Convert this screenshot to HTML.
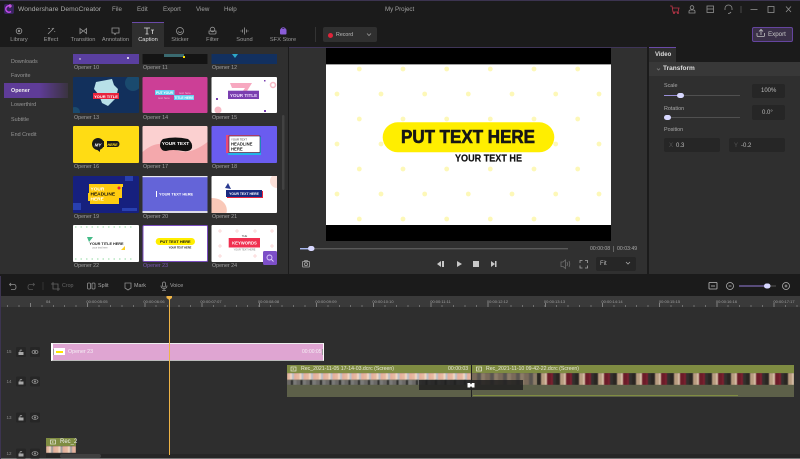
<!DOCTYPE html>
<html><head><meta charset="utf-8">
<style>
html,body{margin:0;padding:0;background:#1b1b1b}
#p{position:relative;width:800px;height:459px;overflow:hidden;background:#1b1b1b;font-family:"Liberation Sans",sans-serif;color:#aaa}
#p div{position:absolute}
.t{white-space:nowrap;line-height:1}
.m{font-size:6.2px;color:#a0a0a0;top:6.5px}
.tab{font-size:5.7px;color:#999;top:37.5px;transform:translateX(-50%);white-space:nowrap;line-height:1}
.side{font-size:5.4px;color:#969696;left:11px;white-space:nowrap;line-height:1}
.lb{font-size:5.3px;color:#a0a0a0;white-space:nowrap;line-height:1}
.rl{font-size:4px;color:#a0a0a0;top:299.5px;white-space:nowrap;line-height:1;transform:translateX(-50%)}
.box{background:#262626;border-radius:2px}
svg{position:absolute;left:0;top:0}
</style></head><body><div id="p">
<div style="left:0;top:0;width:800px;height:1px;background:#3c3450"></div>
<div style="left:0;top:276px;width:1px;height:183px;background:#3c3450"></div>

<!-- panels -->
<div style="left:0;top:47px;width:288px;height:227px;background:#2f2f2f"></div>
<div style="left:289px;top:47px;width:358px;height:227px;background:#303030;border-top:1px solid #3f3558;box-sizing:border-box"></div>
<div style="left:649px;top:62px;width:151px;height:212px;background:#2f2f2f"></div>
<div style="left:649px;top:47px;width:27px;height:15px;background:#2f2f2f;border-top:1px solid #6a4aa8;box-sizing:border-box"></div>
<div style="left:649px;top:62px;width:151px;height:14px;background:#383838"></div>
<div style="left:132px;top:22px;width:32px;height:25px;background:#2f2f2f;border-top:1px solid #6a4aa8;box-sizing:border-box"></div>

<!-- title bar -->
<div style="left:4px;top:4px;width:10px;height:10px;background:#3a2560;border-radius:2px"></div>
<div class="t" style="left:18px;top:6.5px;font-size:6.7px;letter-spacing:.05px;color:#aaa">Wondershare DemoCreator</div>
<div class="t m" style="left:112px">File</div>
<div class="t m" style="left:137px">Edit</div>
<div class="t m" style="left:163px">Export</div>
<div class="t m" style="left:196px">View</div>
<div class="t m" style="left:224px">Help</div>
<div class="t m" style="left:385px">My Project</div>

<!-- tabs -->
<div class="tab" style="left:19px">Library</div>
<div class="tab" style="left:51px">Effect</div>
<div class="tab" style="left:83px">Transition</div>
<div class="tab" style="left:115.5px">Annotation</div>
<div class="tab" style="left:148px;color:#e0e0e0">Caption</div>
<div class="tab" style="left:180px">Sticker</div>
<div class="tab" style="left:212.5px">Filter</div>
<div class="tab" style="left:244.5px">Sound</div>
<div class="tab" style="left:283px">SFX Store</div>

<!-- record / export -->
<div style="left:315px;top:27px;width:1px;height:15px;background:#333"></div>
<div style="left:323px;top:27px;width:54px;height:15px;background:#303030;border-radius:2px"></div>
<div style="left:328px;top:32.5px;width:5px;height:5px;background:#e0243a;border-radius:50%"></div>
<div class="t" style="left:336px;top:32.500px;font-size:5.3px;color:#bbb">Record</div>
<div style="left:752px;top:27px;width:41px;height:15px;box-sizing:border-box;border:1px solid #65459f;border-radius:2px;background:#3a3048"></div>
<div class="t" style="left:768px;top:32px;font-size:6.2px;color:#c8c8c8">Export</div>

<!-- sidebar -->
<div class="side" style="top:59.500px">Downloads</div>
<div class="side" style="top:74px">Favorite</div>
<div style="left:4px;top:83px;width:64px;height:15px;background:linear-gradient(90deg,#5f3c98 0%,#5f3c98 55%,#3a3340 100%)"></div>
<div class="side" style="top:88.500px;color:#eee;font-weight:bold">Opener</div>
<div class="side" style="top:103px">Lowerthird</div>
<div class="side" style="top:118px">Subtitle</div>
<div class="side" style="top:132.500px">End Credit</div>

<!-- thumb labels -->
<div class="lb" style="left:74px;top:65.500px">Opener 10</div><div class="lb" style="left:143px;top:65.500px">Opener 11</div><div class="lb" style="left:212px;top:65.500px">Opener 12</div>
<div class="lb" style="left:74px;top:115.500px">Opener 13</div><div class="lb" style="left:143px;top:115.500px">Opener 14</div><div class="lb" style="left:212px;top:115.500px">Opener 15</div>
<div class="lb" style="left:74px;top:164.500px">Opener 16</div><div class="lb" style="left:143px;top:164.500px">Opener 17</div><div class="lb" style="left:212px;top:164.500px">Opener 18</div>
<div class="lb" style="left:74px;top:214.500px">Opener 19</div><div class="lb" style="left:143px;top:214.500px">Opener 20</div><div class="lb" style="left:212px;top:214.500px">Opener 21</div>
<div class="lb" style="left:74px;top:263.500px">Opener 22</div><div class="lb" style="left:143px;top:263.500px;color:#7c55b8">Opener 23</div><div class="lb" style="left:212px;top:263.500px">Opener 24</div>

<!-- preview time -->
<div class="t" style="left:590px;top:246.500px;font-size:5.2px;color:#aaa">00:00:08</div>
<div style="left:613px;top:246px;width:1px;height:6px;background:#666"></div>
<div class="t" style="left:617px;top:246.500px;font-size:5.2px;color:#aaa">00:03:49</div>
<div style="left:596px;top:257px;width:40px;height:14px;background:#262626;border-radius:2px"></div>
<div class="t" style="left:600px;top:261px;font-size:6px;color:#bbb">Fit</div>

<!-- right panel text -->
<div class="t" style="left:655px;top:52px;font-size:6px;color:#ddd;font-weight:bold">Video</div>
<div class="t" style="left:663px;top:66px;font-size:6.5px;color:#ddd;font-weight:bold">Transform</div>
<div class="t" style="left:664px;top:84px;font-size:5.4px;color:#aaa">Scale</div>
<div class="box" style="left:752px;top:84px;width:33px;height:14px"></div>
<div class="t" style="left:761px;top:88px;font-size:6px;color:#bbb">100%</div>
<div class="t" style="left:664px;top:106.500px;font-size:5.4px;color:#aaa">Rotation</div>
<div class="box" style="left:752px;top:105px;width:33px;height:15px"></div>
<div class="t" style="left:762px;top:109.500px;font-size:6px;color:#bbb">0.0°</div>
<div class="t" style="left:664px;top:128px;font-size:5.4px;color:#aaa">Position</div>
<div class="box" style="left:664px;top:138px;width:56px;height:14px"></div>
<div class="t" style="left:669px;top:142.500px;font-size:6px;color:#555">X</div>
<div class="t" style="left:676px;top:142.500px;font-size:6px;color:#bbb">0.3</div>
<div class="box" style="left:729px;top:138px;width:56px;height:14px"></div>
<div class="t" style="left:734px;top:142.500px;font-size:6px;color:#555">Y</div>
<div class="t" style="left:741px;top:142.500px;font-size:6px;color:#bbb">-0.2</div>

<!-- timeline -->
<div style="left:1px;top:296px;width:799px;height:11px;background:#3a3a3a"></div>
<div style="left:1px;top:307px;width:799px;height:152px;background:#2e2e2e"></div>
<div style="left:6.720px;top:305px;width:794px;height:2px;background:repeating-linear-gradient(90deg,#707070 0 1px,transparent 1px 11.440px)"></div>
<div style="left:29.600px;top:303px;width:771px;height:4px;background:repeating-linear-gradient(90deg,#808080 0 1px,transparent 1px 57.200px)"></div>
<div class="t" style="left:46px;top:299.500px;font-size:4px;color:#a0a0a0">04</div>
<div class="rl" style="left:97px">00:00:05:05</div><div class="rl" style="left:154px">00:00:06:06</div><div class="rl" style="left:211px">00:00:07:07</div><div class="rl" style="left:268.500px">00:00:08:08</div><div class="rl" style="left:326px">00:00:09:09</div><div class="rl" style="left:383px">00:00:10:10</div><div class="rl" style="left:440.500px">00:00:11:11</div><div class="rl" style="left:497.500px">00:00:12:12</div><div class="rl" style="left:554.500px">00:00:13:13</div><div class="rl" style="left:612px">00:00:14:14</div><div class="rl" style="left:669.500px">00:00:15:15</div><div class="rl" style="left:726.500px">00:00:16:16</div><div class="rl" style="left:784px">00:00:17:17</div>

<div class="t" style="left:62px;top:283.500px;font-size:5.3px;color:#666">Crop</div>
<div class="t" style="left:98px;top:283.500px;font-size:5.4px;color:#a8a8a8">Split</div>
<div class="t" style="left:134px;top:283.500px;font-size:5.4px;color:#a8a8a8">Mark</div>
<div class="t" style="left:170px;top:283.500px;font-size:5.4px;color:#a8a8a8">Voice</div>

<!-- track heads -->
<div class="t" style="left:6.500px;top:350px;font-size:4.500px;color:#888">15</div>
<div class="t" style="left:6.500px;top:380px;font-size:4.500px;color:#888">14</div>
<div class="t" style="left:6.500px;top:415.500px;font-size:4.500px;color:#888">13</div>
<div class="t" style="left:6.500px;top:451.500px;font-size:4.500px;color:#888">12</div>

<!-- opener clip -->
<div style="left:51px;top:343px;width:273px;height:18px;background:#dfa5d2;border-left:2px solid #fff;border-right:1px solid #fff;border-top:1px solid #eee;border-bottom:1px solid #bbb;box-sizing:border-box"></div>
<div style="left:53px;top:349px;width:1px;height:6px;background:#999"></div>
<div style="left:322px;top:349px;width:1px;height:6px;background:#999"></div>
<div style="left:54px;top:348px;width:11px;height:7px;background:#fff"></div>
<div style="left:56px;top:351px;width:7px;height:1.500px;background:#ffe600"></div>
<div class="t" style="left:68px;top:349.500px;font-size:5.3px;color:#f5f0f5">Opener 23</div>
<div class="t" style="left:302px;top:349.500px;font-size:5px;color:#f5f0f5">00:00:05</div>

<!-- rec clips -->
<div style="left:287px;top:365px;width:184px;height:32px;background:#5d6049"></div>
<div style="left:287px;top:365px;width:184px;height:8px;background:#7f8c42"></div>
<div style="left:287px;top:373px;width:184px;height:12px;overflow:hidden">
 <div style="left:0;top:0;width:184px;height:7px;filter:blur(.5px);background:repeating-linear-gradient(90deg,#e6b8a0 0 3px,#f4d8c4 3px 5px,#b8c0c8 5px 7px,#e6b09c 7px 9.600px)"></div>
 <div style="left:0;top:7px;width:184px;height:5px;filter:blur(.5px);background:repeating-linear-gradient(90deg,#6a6866 0 4px,#2a2a28 4px 6px,#7a7a78 6px 9.600px)"></div>
</div>
<div style="left:472px;top:365px;width:322px;height:32px;background:#5d6049"></div>
<div style="left:472px;top:365px;width:322px;height:8px;background:#7f8c42"></div>
<div style="left:472px;top:373px;width:65px;height:12px;overflow:hidden"><div style="left:0;top:0;width:65px;height:12px;filter:blur(.6px);background:repeating-linear-gradient(90deg,#7a6a5a 0 5px,#5a5550 5px 9px,#8c7c68 9px 13px)"></div></div>
<div style="left:537px;top:373px;width:257px;height:12px;overflow:hidden"><div style="left:0;top:0;width:257px;height:12px;filter:blur(.6px);background:repeating-linear-gradient(90deg,#2a2622 0 4px,#b89c80 4px 8px,#d8c0a8 8px 10px,#6c1c28 10px 14px,#7c2030 14px 16px,#33302e 16px 19px)"></div></div>
<div style="left:473px;top:395px;width:265px;height:1px;background:#7f8c42"></div>
<div class="t" style="left:301px;top:366.500px;font-size:5.200px;color:#e8e8d8">Rec_2021-11-05 17-14-03.dcrc (Screen)</div>
<div class="t" style="left:448px;top:366.500px;font-size:5.200px;color:#e8e8d8">00:00:03</div>
<div class="t" style="left:486px;top:366.500px;font-size:5.200px;color:#e8e8d8">Rec_2021-11-10 09-42-22.dcrc (Screen)</div>
<div style="left:419px;top:380px;width:104px;height:10px;background:rgba(32,32,32,.85)"></div>
<div style="left:471px;top:365px;width:1px;height:32px;background:#222"></div>

<div style="left:46px;top:437.500px;width:30px;height:8.500px;background:#7f8c42"></div>
<div style="left:46px;top:446px;width:30px;height:7px;overflow:hidden"><div style="left:0;top:0;width:30px;height:7px;filter:blur(.5px);background:repeating-linear-gradient(90deg,#e6b8a0 0 3px,#f4d8c4 3px 5px,#9a9a9a 5px 7px,#e6b09c 7px 9.600px)"></div></div>
<div class="t" style="left:60px;top:439px;font-size:6px;color:#eee">Rec_2</div>
<div style="left:46px;top:454px;width:754px;height:4px;background:#262626"></div>
<div style="left:60px;top:454px;width:41px;height:4px;background:#404040;border-radius:2px"></div>
<div style="left:1px;top:458px;width:799px;height:1px;background:#777"></div>

<!-- playhead -->
<div style="left:169px;top:297px;width:1px;height:158px;background:#efb446"></div>

<svg width="800" height="459" viewBox="0 0 800 459" font-family="Liberation Sans, sans-serif">
<defs>
<clipPath id="c13"><rect x="73" y="77" width="66" height="36"/></clipPath>
<clipPath id="c15"><rect x="211.500" y="77" width="65.500" height="36"/></clipPath>
<clipPath id="c21"><rect x="211.500" y="176" width="65.500" height="37"/></clipPath>
</defs>
<!-- logo -->
<path d="M11 6.500A3.200 3.200 0 1 0 11 11.500" fill="none" stroke="#c04ae8" stroke-width="1.500"/><path d="M10 4v4M8 6h4" stroke="#e060f0" stroke-width="1"/>
<!-- title icons -->
<g fill="none" stroke="#909090" stroke-width=".8">
<path d="M670 6h2l1 6h5l1-4h-6.500" stroke="#c0364a"/><circle cx="674" cy="13" r=".6" stroke="#c0364a"/><circle cx="678" cy="13" r=".6" stroke="#c0364a"/>
<circle cx="692" cy="7.500" r="1.800"/><path d="M689 13v-1.500q0-1.500 1.500-1.500h3q1.500 0 1.500 1.500V13z"/>
<rect x="707" y="6" width="6.500" height="6.500"/><path d="M707 9h6.500"/>
<path d="M725 10v-1.500a3.500 3.500 0 0 1 7 0V10M731 12q-1 1.500-3 1.500"/>
<path d="M741 6v7" stroke="#555"/><path d="M750.500 9.500h7"/><rect x="768" y="6.500" width="6" height="6"/><path d="M786 6.500l5 5.500M791 6.500l-5 5.500"/>
</g>
<!-- tab icons -->
<g fill="none" stroke="#999" stroke-width=".8">
<circle cx="19" cy="31" r="2.800"/><circle cx="19" cy="31" r=".8"/>
<path d="M48 34l6-6M52 28l.5 1M55 31l-.5 1M48 28.500h2"/>
<path d="M80 28.500l3 2.500-3 2.500zM86.500 28.500l-3 2.500 3 2.500z"/>
<path d="M112 28h7v5h-3l-1 1.500-1-1.500h-2z"/>
<path d="M144 28h6M147 28v6M145.500 34h3M151 30h3M152.500 30v4" stroke="#ddd"/>
<circle cx="180" cy="31" r="3.500"/><path d="M178 31.500q2 2 4 0"/>
<circle cx="212.500" cy="29.500" r="2.300"/><path d="M209 33v-2h7v2q0 1-1 1h-5q-1 0-1-1z"/>
<path d="M244.500 27.500v7M242.500 29.500v3M246.500 29.500v3M241 30.500v1M248 30.500v1"/>
</g>
<rect x="280" y="29" width="6.500" height="5.500" rx="1" fill="#8a5cd8"/><path d="M281 29q2.200-2.500 4.500 0" fill="none" stroke="#8a5cd8"/>
<path d="M367 33.500l2 2 2-2" fill="none" stroke="#999" stroke-width=".8"/>
<path d="M757 33v2.500q0 1 1 1h5.500q1 0 1-1V33M761 35v-5M759 31.500l2-2 2 2" fill="none" stroke="#c0c0c0" stroke-width=".8"/>

<!-- top row thumbs (cropped) -->
<rect x="73" y="54" width="66" height="10" fill="#5a3fa0"/><circle cx="80" cy="59" r=".7" fill="#fff"/><circle cx="128" cy="58" r="1" fill="#fff"/>
<rect x="142.500" y="54" width="65" height="10" fill="#141414"/><rect x="164" y="54" width="20" height="3" fill="#3a6a70"/><rect x="183" y="56" width="2" height="2" fill="#ffe000"/>
<rect x="211.500" y="54" width="65.500" height="10" fill="#12305f"/><path d="M232 54h6l-3 4z" fill="#2ea8c8"/>

<!-- 13 -->
<g clip-path="url(#c13)"><rect x="73" y="77" width="66" height="36" rx="1" fill="#12305c"/><circle cx="133" cy="83" r="8" fill="#1a4a6e"/><circle cx="75" cy="112" r="5" fill="#1a4a6e"/>
<path d="M96 82l16-3 2 6 4 4-2 9-8 8-6-3-3-8-5-6z" fill="#b8e0e8"/><rect x="93" y="93" width="26" height="6" fill="#e8243c"/>
<text x="106" y="97.800" font-size="4" font-weight="bold" fill="#fff" text-anchor="middle">YOUR TITLE</text></g>
<!-- 14 -->
<rect x="142.500" y="77" width="65" height="36" rx="1" fill="#cc3f96"/><rect x="155" y="90" width="19.500" height="5" fill="#66d0f0"/><rect x="174" y="95" width="20" height="5" fill="#66d0f0"/>
<text x="164.500" y="94" font-size="3.300" font-weight="bold" fill="#fff" text-anchor="middle">PUT YOUR</text><text x="184" y="99" font-size="3.300" font-weight="bold" fill="#fff" text-anchor="middle">TITLE HERE</text>
<text x="185" y="94" font-size="3" fill="#f0b8d8" text-anchor="middle">text here</text><text x="164" y="99" font-size="3" fill="#f0b8d8" text-anchor="middle">text here</text>
<!-- 15 -->
<g clip-path="url(#c15)"><rect x="211.500" y="77" width="65.500" height="36" rx="1" fill="#fff"/><path d="M230 83h22l-10 16-4-1 7-10h-13z" fill="#f7a8c0"/><circle cx="218" cy="110" r="3.500" fill="#f7b8c4"/><circle cx="273" cy="85" r="2.500" fill="none" stroke="#f7b8c4" stroke-width="1.500"/>
<rect x="228" y="90.700" width="31" height="8.300" fill="#7a3fb0"/><text x="243.500" y="96.800" font-size="4.600" font-weight="bold" fill="#f0e0ff" text-anchor="middle">YOUR TITLE</text><rect x="216" y="98" width="2" height="2" fill="#7a3fb0"/><rect x="264" y="80" width="1.500" height="1.500" fill="#7a3fb0"/><rect x="264" y="110" width="2" height="2" fill="#7a3fb0"/></g>

<!-- 16 -->
<rect x="73" y="126" width="66" height="37" rx="1" fill="#ffdc14"/><ellipse cx="98" cy="144" rx="6" ry="6" fill="#1a1a1a"/><path d="M96 149l4 3 0-3z" fill="#1a1a1a"/><rect x="98" y="141" width="19" height="6" fill="#1a1a1a"/><ellipse cx="117" cy="144" rx="2.500" ry="3" fill="#1a1a1a"/>
<text x="98" y="146.500" font-size="4.500" font-weight="bold" font-style="italic" fill="#fff" text-anchor="middle">MY</text><rect x="104" y="141" width="3" height="6" fill="#ffdc14"/><text x="112.500" y="146" font-size="3.600" font-weight="bold" font-style="italic" fill="#ffdc14" text-anchor="middle">HERE</text>
<!-- 17 -->
<rect x="142.500" y="126" width="65" height="37" rx="1" fill="#fbd0d0"/><path d="M142.500 152q16-14 30-4t35-6v21h-65z" fill="#f4a8ac"/><path d="M163 139q12-3 25 0 5 4 4 9-2 4-9 3-11-2-17 0-5 0-6-5 0-5 3-7z" fill="#111"/>
<text x="175.500" y="145" font-size="4.800" font-weight="bold" fill="#fff" text-anchor="middle">YOUR TEXT</text>
<!-- 18 -->
<rect x="211.500" y="126" width="65.500" height="37" rx="1" fill="#6a5cf0"/><rect x="228" y="137" width="33" height="18" fill="#22b4e8"/><rect x="226" y="135" width="33" height="18" fill="#e84a78"/><rect x="229" y="136" width="31" height="16.500" fill="#fff" stroke="#1a1a40" stroke-width=".6"/>
<text x="231" y="140.500" font-size="2.800" fill="#333">YOUR TEXT</text><text x="231" y="145.500" font-size="4.200" font-weight="bold" fill="#222">HEADLINE</text><text x="231" y="150.500" font-size="4.200" font-weight="bold" fill="#222">HERE</text>

<!-- 19 -->
<rect x="73" y="176" width="66" height="37" rx="1" fill="#16207e"/><rect x="73" y="203" width="8" height="7" fill="#2840b0"/><rect x="125" y="176" width="8" height="5" fill="#2840b0"/><rect x="122" y="208" width="15" height="3" fill="#2840b0"/>
<path d="M89 184h34v3h-1v11h-3v6H90v-3h-2v-8h1z" fill="#ffcc10"/><text x="90.500" y="190.500" font-size="4.800" font-weight="bold" fill="#fff">YOUR</text><text x="90.500" y="195.500" font-size="4.800" font-weight="bold" fill="#111">HEADLINE</text><text x="90.500" y="200.500" font-size="4.800" font-weight="bold" fill="#fff">HERE</text><circle cx="119" cy="188" r="1.500" fill="#e8243c"/>
<!-- 20 -->
<rect x="142.500" y="176" width="65" height="37" rx="1" fill="#6464d8"/><rect x="142.500" y="176" width="65" height="1.200" fill="#e8e8f0"/><rect x="142.500" y="211" width="65" height="2" fill="#dcdce8"/><rect x="156" y="191" width="1" height="6" fill="#fff"/>
<text x="159" y="195.500" font-size="3.900" font-weight="bold" fill="#fff">YOUR TEXT HERE</text>
<!-- 21 -->
<g clip-path="url(#c21)"><rect x="211.500" y="176" width="65.500" height="37" rx="1" fill="#fff"/><path d="M211.500 198q10 0 14 7 2 4 1 8h-15z" fill="#f9c8b8"/><circle cx="277" cy="181" r="7" fill="#fbe0d8"/>
<rect x="227" y="191" width="36" height="7" fill="#e8243c"/><rect x="226" y="190" width="36" height="7" fill="#1a2a80"/><text x="244" y="195" font-size="3.400" font-weight="bold" fill="#fff" text-anchor="middle">YOUR TEXT HERE</text><path d="M225 188l3-5 3 6z" fill="#2a3a90"/></g>

<!-- 22 -->
<rect x="73" y="225" width="66" height="37" rx="1" fill="#fff"/><path d="M75 227h60M75 259h60" stroke="#c8ecd0" stroke-width="2" stroke-dasharray="1.500 4"/><path d="M87 237h6l-4 5z" fill="#44bb88"/><path d="M125 246v4h-4z" fill="#ffd020"/>
<text x="106.500" y="245" font-size="3.800" font-weight="bold" fill="#222" text-anchor="middle">YOUR TITLE HERE</text><text x="100" y="248.500" font-size="2.500" fill="#888" text-anchor="middle">your text here</text>
<!-- 23 -->
<rect x="143" y="225.500" width="64.500" height="36" rx="1" fill="#fff" stroke="#7c4fc0" stroke-width="1"/>
<rect x="155.700" y="238" width="39.300" height="7" rx="3.500" fill="#ffee00"/><text x="175.300" y="243.200" font-size="3.900" font-weight="bold" fill="#111" text-anchor="middle">PUT TEXT HERE</text><text x="180" y="248.500" font-size="2.600" font-weight="bold" fill="#111" text-anchor="middle">YOUR TEXT HERE</text>
<!-- 24 -->
<rect x="211.500" y="225" width="65.500" height="37" rx="1" fill="#fff"/><g stroke="#fbd8d8" stroke-width="1"><path d="M218 231h4M220 229v4M235 231h4M237 229v4M253 231h4M255 229v4M270 231h4M272 229v4M218 246h4M220 244v4M270 246h4M272 244v4M218 256h4M220 254v4M253 256h4M255 254v4"/></g>
<rect x="228.700" y="238" width="31.300" height="9.500" fill="#f03050"/><text x="244.500" y="237" font-size="2.800" fill="#444" text-anchor="middle">THE</text><text x="244.500" y="244.500" font-size="4.200" font-weight="bold" fill="#fff" text-anchor="middle">KEYWORDS</text><text x="244.500" y="250.500" font-size="2.500" fill="#777" text-anchor="middle">YOUR TEXT HERE</text>
<rect x="263" y="251" width="14" height="14" rx="1.500" fill="#7d4fc8"/><circle cx="269.500" cy="257.500" r="2.500" fill="none" stroke="#e0d0ff" stroke-width=".9"/><path d="M271.500 259.500l2 2" stroke="#e0d0ff" stroke-width=".9"/>
<!-- panel scrollbar -->
<rect x="282" y="115" width="2.500" height="75" rx="1.200" fill="#424242"/>

<!-- video -->
<rect x="326" y="48" width="285" height="193" fill="#000"/><rect x="326" y="64" width="285" height="161" fill="#fff"/><rect x="326" y="64" width="285" height=".8" fill="#888"/>
<g fill="#fdf8b8">
<circle cx="359.300" cy="69" r="2.400"/><circle cx="403" cy="69" r="2.400"/><circle cx="446.700" cy="69" r="2.400"/><circle cx="490.300" cy="69" r="2.400"/><circle cx="534" cy="69" r="2.400"/><circle cx="577.700" cy="69" r="2.400"/>
<circle cx="337" cy="94" r="2.400"/><circle cx="381" cy="94" r="2.400"/><circle cx="424.700" cy="94" r="2.400"/><circle cx="468.300" cy="94" r="2.400"/><circle cx="512" cy="94" r="2.400"/><circle cx="555.700" cy="94" r="2.400"/><circle cx="599" cy="94" r="2.400"/>
<circle cx="359.300" cy="119" r="2.400"/><circle cx="403" cy="119" r="2.400"/><circle cx="446.700" cy="119" r="2.400"/><circle cx="490.300" cy="119" r="2.400"/><circle cx="534" cy="119" r="2.400"/><circle cx="577.700" cy="119" r="2.400"/>
<circle cx="337" cy="144" r="2.400"/><circle cx="381" cy="144" r="2.400"/><circle cx="555.700" cy="144" r="2.400"/><circle cx="599" cy="144" r="2.400"/>
<circle cx="359.300" cy="169" r="2.400"/><circle cx="403" cy="169" r="2.400"/><circle cx="446.700" cy="169" r="2.400"/><circle cx="490.300" cy="169" r="2.400"/><circle cx="534" cy="169" r="2.400"/><circle cx="577.700" cy="169" r="2.400"/>
<circle cx="337" cy="194" r="2.400"/><circle cx="381" cy="194" r="2.400"/><circle cx="424.700" cy="194" r="2.400"/><circle cx="468.300" cy="194" r="2.400"/><circle cx="512" cy="194" r="2.400"/><circle cx="555.700" cy="194" r="2.400"/><circle cx="599" cy="194" r="2.400"/>
<circle cx="359.300" cy="219" r="2.400"/><circle cx="403" cy="219" r="2.400"/><circle cx="446.700" cy="219" r="2.400"/><circle cx="490.300" cy="219" r="2.400"/><circle cx="534" cy="219" r="2.400"/><circle cx="577.700" cy="219" r="2.400"/>
</g>
<rect x="382.700" y="122.300" width="171.600" height="30" rx="15" fill="#ffee00"/>
<text x="468" y="143" font-size="18" font-weight="bold" fill="#161616" text-anchor="middle" textLength="134" lengthAdjust="spacingAndGlyphs" stroke="#161616" stroke-width=".6">PUT TEXT HERE</text>
<text x="488.500" y="161.300" font-size="10.500" font-weight="bold" fill="#111" text-anchor="middle" textLength="67" lengthAdjust="spacingAndGlyphs" stroke="#111" stroke-width=".2">YOUR TEXT HE</text>

<!-- scrubber -->
<rect x="300" y="248" width="268" height="1.400" fill="#5a5a5a"/><rect x="300" y="248" width="11" height="1.400" fill="#a8b8f0"/><rect x="308" y="246" width="6.500" height="5" rx="2.500" fill="#d8d8ff"/>
<!-- player icons -->
<g fill="none" stroke="#a8a8a8" stroke-width=".8">
<rect x="302.500" y="261.500" width="7" height="5.500" rx=".5"/><circle cx="306" cy="264.200" r="1.500"/><path d="M304 261.500l.8-1h2.400l.8 1"/>
<path d="M561 262h2l2.500-2v8.500l-2.500-2h-2zM567 262q1 2 0 4M569 261q1.500 3 0 6" stroke="#707070"/>
<path d="M580 263v-2.500h2.500M585 260.500h2.500v2.500M587.500 265.500v2.500H585M582.500 268H580v-2.500"/>
<path d="M626 262l2 2 2-2"/>
</g>
<g fill="#c8c8c8">
<path d="M441 261v6l-4-3z"/><rect x="442" y="261" width="2" height="6"/>
<path d="M457 261l5 3-5 3z"/><rect x="473" y="261" width="6" height="6"/>
<path d="M491 261l4 3-4 3z"/><rect x="495" y="261" width="1.500" height="6"/>
</g>

<!-- right panel controls -->
<path d="M657 68.500l1.500 1.500 1.500-1.500" fill="none" stroke="#888" stroke-width=".7"/>
<rect x="664" y="95" width="76" height="1" fill="#505050"/><rect x="664" y="95" width="16" height="1" fill="#9a90d8"/><rect x="677" y="93" width="7" height="5" rx="2.500" fill="#d8d8ff"/>
<rect x="664" y="117" width="76" height="1" fill="#505050"/><rect x="664" y="115" width="7" height="5" rx="2.500" fill="#d8d8ff"/>

<!-- timeline toolbar icons -->
<g fill="none" stroke="#909090" stroke-width=".8">
<path d="M11 283l-1.500 1.500 1.500 1.500M10 284.500h4q2 0 2 2.500t-2 2.500h-3"/>
<path d="M33 283l1.500 1.500-1.500 1.500M34 284.500h-4q-2 0-2 2.500t2 2.500h3" stroke="#555"/>
<path d="M43 282v8" stroke="#3a3a3a"/>
<path d="M53 282v7h7M51 284h7v7" stroke="#666"/>
<rect x="87.500" y="283" width="3" height="6" rx="1"/><rect x="92" y="283" width="3" height="6" rx="1"/>
<path d="M125 283h6v5l-3 2-3-2z"/>
<rect x="162.500" y="282" width="3" height="5" rx="1.500"/><path d="M161 285.500q0 3 3 3t3-3M164 288.500v2M162 290.500h4"/>
<rect x="709" y="282.500" width="8" height="6.500" rx=".5" stroke="#c0c0c0"/><path d="M711 286h4" stroke="#c0c0c0"/>
<circle cx="730" cy="286" r="3.500" stroke="#b0b0b0"/><path d="M728.500 286h3" stroke="#b0b0b0"/>
<circle cx="786" cy="286" r="3.500" stroke="#b0b0b0"/><path d="M784.500 286h3M786 284.500v3" stroke="#b0b0b0"/>
</g>
<rect x="739" y="285.300" width="37" height="1.400" fill="#444"/><rect x="739" y="285.300" width="28" height="1.400" fill="#6c5a9c"/><rect x="764" y="283.500" width="6.500" height="5" rx="2.500" fill="#d8d8ff"/>

<!-- playhead cap -->
<path d="M166.500 296h5.500v2l-2.700 2-2.800-2z" fill="#efb446"/>

<!-- track head buttons -->
<rect x="16" y="347" width="10" height="10" rx="1.500" fill="#262626"/><rect x="30" y="347" width="10" height="10" rx="1.500" fill="#262626"/>
<rect x="16" y="376.500" width="10" height="10" rx="1.500" fill="#262626"/><rect x="30" y="376.500" width="10" height="10" rx="1.500" fill="#262626"/>
<rect x="16" y="412.500" width="10" height="10" rx="1.500" fill="#262626"/><rect x="30" y="412.500" width="10" height="10" rx="1.500" fill="#262626"/>
<rect x="16" y="448.500" width="10" height="10" rx="1.500" fill="#262626"/><rect x="30" y="448.500" width="10" height="10" rx="1.500" fill="#262626"/>
<g fill="#a8a8a8"><rect x="18.500" y="352" width="5" height="3"/><rect x="18.500" y="381.500" width="5" height="3"/><rect x="18.500" y="417.500" width="5" height="3"/><rect x="18.500" y="453.500" width="5" height="3"/></g>
<g fill="none" stroke="#a8a8a8" stroke-width=".7">
<path d="M20 352v-1.500a1.300 1.300 0 0 1 2 0M20 381.500v-1.500a1.300 1.300 0 0 1 2 0M20 417.500v-1.500a1.300 1.300 0 0 1 2 0M20 453.500v-1.500a1.300 1.300 0 0 1 2 0"/>
<ellipse cx="35" cy="352" rx="3" ry="1.800"/><circle cx="35" cy="352" r=".7"/>
<ellipse cx="35" cy="381.500" rx="3" ry="1.800"/><circle cx="35" cy="381.500" r=".7"/>
<ellipse cx="35" cy="417.500" rx="3" ry="1.800"/><circle cx="35" cy="417.500" r=".7"/>
<ellipse cx="35" cy="453.500" rx="3" ry="1.800"/><circle cx="35" cy="453.500" r=".7"/>
</g>

<!-- clip header icons -->
<g fill="none" stroke="#e8e8d8" stroke-width=".7">
<rect x="291" y="367" width="5" height="4"/><rect x="476.500" y="367" width="5" height="4"/><rect x="50.500" y="440" width="5" height="4"/>
</g>
<path d="M292.800 368l1.500 1-1.500 1zM478.300 368l1.500 1-1.500 1zM52.300 441l1.500 1-1.500 1z" fill="#e8e8d8"/>
<path d="M467.500 383h2.500l1 1.500 1-1.500h2.500v4.500H472l-1-1.500-1 1.500h-2.500z" fill="#fff"/>
</svg>
</div></body></html>
